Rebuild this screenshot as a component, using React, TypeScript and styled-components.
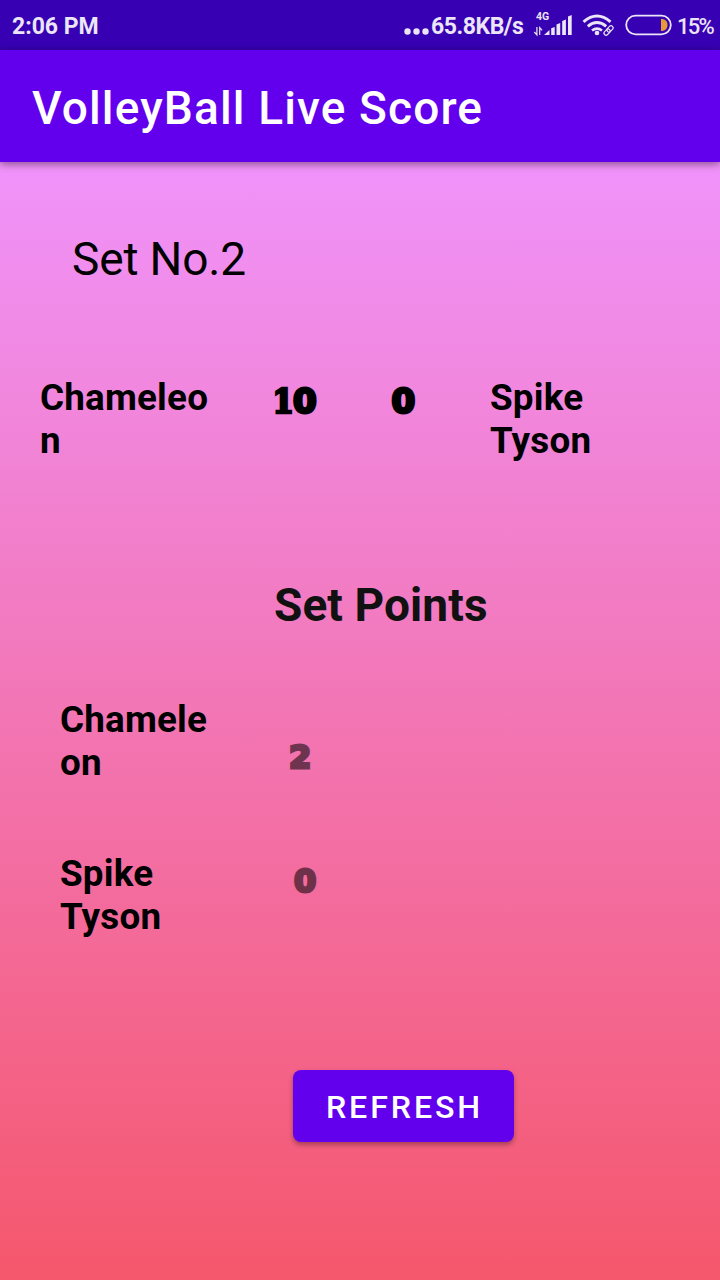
import React from "react";
import styled, { createGlobalStyle } from "styled-components";

const GlobalStyle = createGlobalStyle`
  * { box-sizing: border-box; }
  body { margin: 0; font-family: Roboto, "Liberation Sans", sans-serif; }
`;

const Screen = styled.div`
  display: flex;
  flex-direction: column;
  width: 720px;
  height: 1280px;
  overflow: hidden;
`;

const StatusBar = styled.div`
  display: flex;
  align-items: center;
  flex: none;
  height: 50px;
  padding: 2px 0 0 12px;
  background: #3700b3;
  color: #ebe5f7;
  white-space: nowrap;
`;

const StatusText = styled.span<{ $size: number; $weight: number; $spacing?: number }>`
  font-size: ${(p) => p.$size}px;
  font-weight: ${(p) => p.$weight};
  letter-spacing: ${(p) => p.$spacing ?? 0}px;
`;

const Clock = styled.div`
  width: 390px;
`;

const Network = styled.div`
  display: flex;
  align-items: center;
  flex: none;
  width: 128px;
`;

const Dots = styled.svg`
  flex: none;
  width: 29px;
  height: 26px;
`;

const StatusIcons = styled.svg`
  flex: none;
  width: 146px;
  height: 50px;
  margin-top: -2px;
  margin-right: 1px;
`;

const AppBar = styled.header`
  position: relative;
  display: flex;
  align-items: center;
  flex: none;
  height: 112px;
  padding: 3px 32px 0;
  background: #6200ee;
  box-shadow: 0 2px 8px rgba(0, 0, 0, 0.45);
`;

const Title = styled.h1`
  margin: 0;
  color: #fff;
  font-size: 46px;
  font-weight: 500;
  line-height: 54px;
  letter-spacing: 1.13px;
  white-space: nowrap;
`;

const Content = styled.main`
  display: flex;
  flex-direction: column;
  flex: 1;
  padding-top: 70px;
  background: linear-gradient(180deg, #f093fb, #f5576c);
  color: #000;
`;

const SetNumber = styled.div`
  padding-left: 72px;
  font-size: 46px;
  line-height: 54px;
  letter-spacing: -0.15px;
`;

const MatchRow = styled.section`
  display: grid;
  grid-template-columns: 235px 116px 99px 170px;
  align-items: start;
  height: 86px;
  margin-top: 90px;
  padding-left: 40px;
`;

const TeamName = styled.div<{ $width: number }>`
  width: ${(p) => p.$width}px;
  font-size: 36.8px;
  font-weight: 700;
  line-height: 43px;
  letter-spacing: 0.2px;
  overflow-wrap: anywhere;
`;

const Score = styled.div<{ $size: number; $top: number; $left?: number; $muted?: boolean }>`
  display: flex;
  align-items: baseline;
  padding-top: ${(p) => p.$top}px;
  padding-left: ${(p) => p.$left ?? 0}px;
  font-family: "DejaVu Sans", sans-serif;
  font-size: ${(p) => p.$size}px;
  font-weight: 700;
  line-height: 40px;
  -webkit-text-stroke: 3px currentColor;
  opacity: ${(p) => (p.$muted ? 0.54 : 1)};
`;

const SlabDigit = styled.span`
  width: 20.5px;
  margin-left: -2.5px;
  font-family: "DejaVu Serif Condensed", "DejaVu Serif", serif;
  font-stretch: condensed;
  -webkit-text-stroke-width: 2.5px;
`;

const SectionTitle = styled.h2`
  margin: 116px 0 0 274px;
  color: #111;
  font-size: 46px;
  font-weight: 700;
  line-height: 54px;
  letter-spacing: 0.1px;
`;

const Points = styled.section`
  display: flex;
  flex-direction: column;
  gap: 68px;
  margin-top: 66px;
  padding-left: 60px;
`;

const PointRow = styled.div`
  display: grid;
  grid-template-columns: 229px 100px;
  align-items: start;
  height: 86px;
`;

const RefreshButton = styled.button`
  width: 221px;
  height: 72px;
  margin: 132px 0 0 293px;
  padding: 1px 0 0 2px;
  border: 0;
  border-radius: 8px;
  background: #6200ee;
  box-shadow: 0 3px 5px rgba(0, 0, 0, 0.32);
  color: #fff;
  font-family: Roboto, sans-serif;
  font-size: 32.2px;
  font-weight: 500;
  letter-spacing: 2.87px;
`;

const SvgLabel = styled.text`
  font-family: Roboto, sans-serif;
  font-size: 10.5px;
  font-weight: 700;
`;

function PhoneIndicators() {
  return (
    <StatusIcons viewBox="530 0 146 50" fill="#ebe5f7">
      <SvgLabel x="536" y="20">4G</SvgLabel>
      <g fill="none" stroke="#ebe5f7" strokeWidth="1.200">
        <path d="M536.900 27v8l-2.600-3" />
        <path d="M539.700 35v-7.500l2.400 2.800" />
      </g>
      <path d="M544 35l5.500-5v5zM551.200 28.300l3.500-1.200v7.900h-3.500zM556.500 24.500l3.700-1.500v12h-3.700zM562.200 21l3.700-1.500v15.500h-3.700zM568 16.500l3.700-1.500v20h-3.700z" />
      <g fill="none" stroke="#ebe5f7" strokeWidth="2.900">
        <path d="M583.500 21.800Q597 10.200 610.500 21.800" />
        <path d="M587.800 26.300Q597 18.700 606.200 26.300" />
        <path d="M592 30.500Q597 26.800 602 30.500" strokeWidth="2.600" />
      </g>
      <circle cx="597" cy="33" r="2.300" />
      <g fill="none" stroke="#3700b3" strokeWidth="3">
        <rect x="603.500" y="30" width="7" height="4.200" rx="2.100" transform="rotate(-45 607 32)" />
        <rect x="606.500" y="26.800" width="7" height="4.200" rx="2.100" transform="rotate(-45 610 28.900)" />
      </g>
      <g fill="none" stroke="#ebe5f7" strokeWidth="1.200">
        <rect x="603.500" y="30" width="7" height="4.200" rx="2.100" transform="rotate(-45 607 32)" />
        <rect x="606.500" y="26.800" width="7" height="4.200" rx="2.100" transform="rotate(-45 610 28.900)" />
      </g>
      <rect x="626.200" y="15.700" width="44.600" height="18.600" rx="9.300" fill="none" stroke="#ebe5f7" strokeWidth="1.800" />
      <path d="M661 19h1.500q5 1 5 6t-5 6h-1.500z" fill="#e99a38" />
    </StatusIcons>
  );
}

export default function App() {
  return (
    <>
      <GlobalStyle />
      <Screen>
        <StatusBar>
          <Clock>
            <StatusText $size={23} $weight={700}>2:06 PM</StatusText>
          </Clock>
          <Network>
            <Dots viewBox="0 0 29 26" fill="#ebe5f7">
              <circle cx="5.500" cy="18.500" r="3.200" />
              <circle cx="14.500" cy="18.500" r="3.200" />
              <circle cx="23.500" cy="18.500" r="3.200" />
            </Dots>
            <StatusText $size={23} $weight={700} $spacing={-0.45}>65.8KB/s</StatusText>
          </Network>
          <PhoneIndicators />
          <StatusText $size={22} $weight={500} $spacing={-1.8}>15%</StatusText>
        </StatusBar>
        <AppBar>
          <Title>VolleyBall Live Score</Title>
        </AppBar>
        <Content>
          <SetNumber>Set No.2</SetNumber>
          <MatchRow>
            <TeamName $width={170}>Chameleon</TeamName>
            <Score $size={34} $top={5}>
              <SlabDigit>1</SlabDigit>0
            </Score>
            <Score $size={34} $top={5} $left={0.5}>0</Score>
            <TeamName $width={170}>Spike Tyson</TeamName>
          </MatchRow>
          <SectionTitle>Set Points</SectionTitle>
          <Points>
            <PointRow>
              <TeamName $width={150}>Chameleon</TeamName>
              <Score $size={32} $top={39} $muted>2</Score>
            </PointRow>
            <PointRow>
              <TeamName $width={150}>Spike Tyson</TeamName>
              <Score $size={32} $top={9} $left={5} $muted>0</Score>
            </PointRow>
          </Points>
          <RefreshButton>REFRESH</RefreshButton>
        </Content>
      </Screen>
    </>
  );
}
